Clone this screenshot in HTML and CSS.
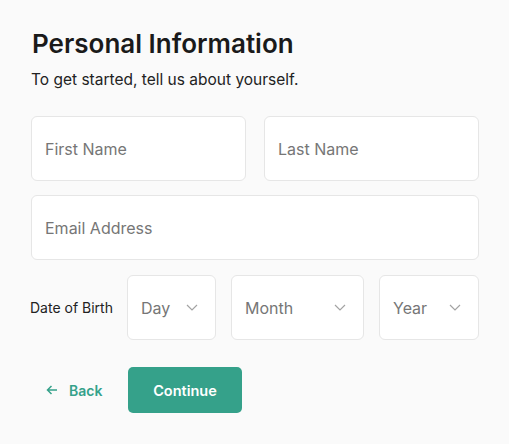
FILE: index.html
```html
<!DOCTYPE html>
<html lang="en">
<head>
<meta charset="utf-8">
<title>Personal Information</title>
<link rel="stylesheet" href="styles.css">
</head>
<body>
<main class="form">
  <h1 class="title">Personal Information</h1>
  <p class="subtitle">To get started, tell us about yourself.</p>
  <div class="row-two">
    <div class="field"><span class="placeholder">First Name</span></div>
    <div class="field"><span class="placeholder">Last Name</span></div>
  </div>
  <div class="field field-email"><span class="placeholder">Email Address</span></div>
  <div class="dob">
    <span class="dob-label">Date of Birth</span>
    <div class="field select select-day"><span class="placeholder">Day</span><svg class="chev" width="12" height="7" viewBox="0 0 12 7"><path d="M1 1l5 5 5-5" fill="none" stroke="#a3a3a3" stroke-width="1.2"/></svg></div>
    <div class="field select select-month"><span class="placeholder">Month</span><svg class="chev" width="12" height="7" viewBox="0 0 12 7"><path d="M1 1l5 5 5-5" fill="none" stroke="#a3a3a3" stroke-width="1.2"/></svg></div>
    <div class="field select select-year"><span class="placeholder">Year</span><svg class="chev" width="12" height="7" viewBox="0 0 12 7"><path d="M1 1l5 5 5-5" fill="none" stroke="#a3a3a3" stroke-width="1.2"/></svg></div>
  </div>
  <div class="actions">
    <a class="back"><svg width="12" height="10" viewBox="0 0 12 10"><path d="M11 5H1.5M5.5 1L1.5 5l4 4" fill="none" stroke="#35a18a" stroke-width="1.5"/></svg><span>Back</span></a>
    <button class="continue">Continue</button>
  </div>
</main>
</body>
</html>
```
FILE: styles.css
```css
html, body {
  margin: 0;
  background: #fafafa;
}
body {
  font-family: Inter, "Open Sans", sans-serif;
  color: #1a1a1a;
}
.form {
  width: 448px;
  padding: 28px 0 0 31px;
}
.title {
  margin: 0 0 0 1px;
  font-size: 26px;
  font-weight: 600;
  line-height: 32px;
  letter-spacing: 0;
}
.subtitle {
  margin: 10px 0 0 0;
  font-size: 15.5px;
  line-height: 20px;
  color: #222;
}
.row-two {
  margin-top: 26px;
  display: grid;
  grid-template-columns: 1fr 1fr;
  gap: 18px;
}
.field {
  box-sizing: border-box;
  height: 65px;
  background: #fff;
  border: 1px solid #e6e6e6;
  border-radius: 6px;
  display: flex;
  align-items: center;
  padding: 0 13px;
}
.placeholder {
  font-size: 16px;
  color: #767676;
}
.field-email {
  margin-top: 14px;
}
.dob {
  margin-top: 15px;
  display: flex;
  align-items: center;
  gap: 15px;
}
.dob-label {
  font-size: 14px;
  color: #222;
  margin-left: -1px;
  width: 83px;
  margin-right: -1px;
  white-space: nowrap;
}
.select {
  justify-content: space-between;
  padding-right: 17px;
}
.select-day { width: 89px; }
.select-month { width: 133px; }
.select-year { width: 100px; }
.chev { display: block; }
.actions {
  margin-top: 27px;
  display: flex;
  align-items: center;
}
.back {
  display: flex;
  align-items: center;
  gap: 11px;
  margin-left: 15px;
  color: #35a18a;
  font-weight: 600;
  font-size: 14px;
  width: 82px;
}
.continue {
  width: 114px;
  height: 46px;
  border: none;
  border-radius: 5px;
  background: #35a18a;
  color: #fff;
  font-family: inherit;
  font-size: 14.5px;
  font-weight: 600;
}
```
